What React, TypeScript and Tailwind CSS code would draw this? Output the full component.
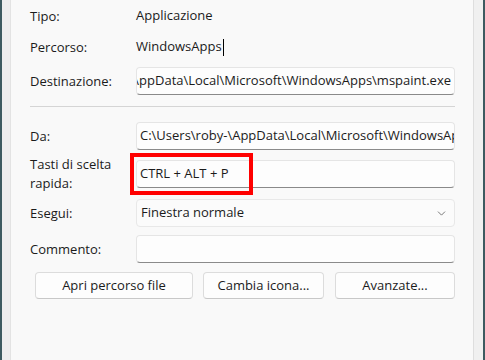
import { ChevronDown } from 'lucide-react';

const font = { fontFamily: '"Segoe UI", "Open Sans", "Noto Sans", sans-serif' };

function Label({ children }: { children: React.ReactNode }) {
  return <div className="w-[106px] shrink-0 leading-[19px]">{children}</div>;
}

function Field({ children, end }: { children?: React.ReactNode; end?: boolean }) {
  return (
    <div
      className={
        'flex h-[28px] w-[319px] items-center overflow-hidden whitespace-nowrap rounded-[4px] border border-[#e5e5e5] border-b-[#8a8a8a] bg-[#fdfdfd] ' +
        (end ? 'justify-end pr-[3px]' : 'pl-[3px]')
      }
    >
      {children}
    </div>
  );
}

export default function App() {
  return (
    <div className="flex h-[360px] w-[485px] overflow-hidden text-[13px] text-[#1b1b1b]" style={font}>
      <div className="w-[2px] bg-[#3d5a60]" />
      <div className="w-[9px] border-r border-[#e3e3e3] bg-[#ededed]" />

      <div className="flex flex-1 flex-col bg-[#f9f9f9] pl-[19px]">
        {/* Tipo / Percorso */}
        <div className="mt-[5px] flex h-[22px] items-center">
          <Label>Tipo:</Label>
          <span>Applicazione</span>
        </div>
        <div className="mt-[9px] flex h-[22px] items-center">
          <Label>Percorso:</Label>
          <span>WindowsApps</span>
          <span className="ml-[1px] h-[17px] w-[1px] bg-black" />
        </div>

        {/* Destinazione (scrolled to the end) */}
        <div className="mt-[9px] flex items-center">
          <Label>Destinazione:</Label>
          <Field end>AppData\Local\Microsoft\WindowsApps\mspaint.exe</Field>
        </div>

        <div className="mt-[11px] h-[1px] w-[425px] bg-[#d5d5d5]" />

        {/* Da */}
        <div className="mt-[15px] flex items-center">
          <Label>Da:</Label>
          <Field>C:\Users\roby-\AppData\Local\Microsoft\WindowsApps</Field>
        </div>

        {/* Tasti di scelta rapida */}
        <div className="mt-[10px] flex h-[28px] items-center">
          <Label>
            Tasti di scelta
            <br />
            rapida:
          </Label>
          <div className="relative">
            <Field>CTRL + ALT + P</Field>
            <div className="pointer-events-none absolute left-[-6px] top-[-7px] h-[42px] w-[123px] border-[4px] border-[#ff0000]" />
          </div>
        </div>

        {/* Esegui */}
        <div className="mt-[11px] flex items-center">
          <Label>Esegui:</Label>
          <div className="flex h-[28px] w-[319px] items-center justify-between rounded-[4px] border border-[#e8e8e8] bg-[#fbfbfb] pl-[4px] pr-[6px]">
            <span>Finestra normale</span>
            <ChevronDown className="h-[13px] w-[13px] text-[#5c5c5c]" strokeWidth={1.5} />
          </div>
        </div>

        {/* Commento */}
        <div className="mt-[8px] flex items-center">
          <Label>Commento:</Label>
          <Field />
        </div>

        {/* Buttons */}
        <div className="ml-[5px] mt-[9px] flex gap-[10px]">
          <button className="h-[27px] w-[158px] rounded-[4px] border border-[#dcdcdc] border-b-[#c8c8c8] bg-[#fdfdfd]">
            Apri percorso file
          </button>
          <button className="h-[27px] w-[121px] rounded-[4px] border border-[#dcdcdc] border-b-[#c8c8c8] bg-[#fdfdfd]">
            Cambia icona...
          </button>
          <button className="ml-[1px] h-[27px] w-[120px] rounded-[4px] border border-[#dcdcdc] border-b-[#c8c8c8] bg-[#fdfdfd]">
            Avanzate...
          </button>
        </div>
      </div>

      <div className="w-[10px] border-l border-[#dedede] bg-[#f0f0f0]" />
      <div className="w-[2px] bg-[#3d5a60]" />
    </div>
  );
}
